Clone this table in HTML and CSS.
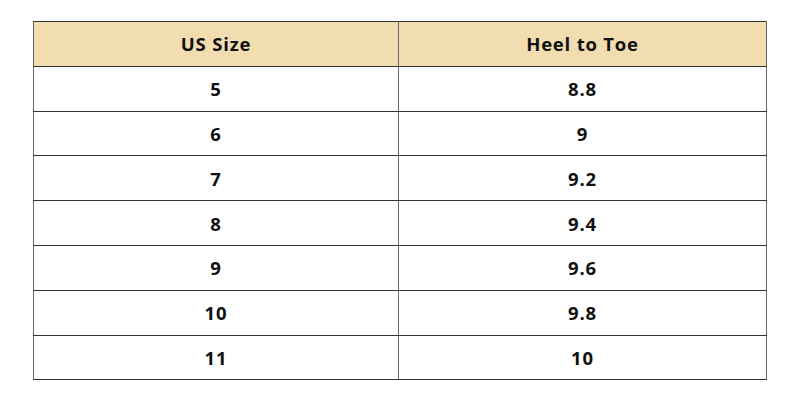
FILE: index.html
```html
<!DOCTYPE html>
<html>
<head>
<meta charset="utf-8">
<link rel="stylesheet" href="styles.css">
</head>
<body>
<div class="wrap">
<table class="size-table">
<thead>
<tr><th>US Size</th><th>Heel to Toe</th></tr>
</thead>
<tbody>
<tr><td>5</td><td>8.8</td></tr>
<tr><td>6</td><td>9</td></tr>
<tr><td>7</td><td>9.2</td></tr>
<tr><td>8</td><td>9.4</td></tr>
<tr><td>9</td><td>9.6</td></tr>
<tr><td>10</td><td>9.8</td></tr>
<tr><td>11</td><td>10</td></tr>
</tbody>
</table>
</div>
</body>
</html>
```
FILE: styles.css
```css
html, body {
  margin: 0;
  padding: 0;
  background: #ffffff;
}
.wrap {
  padding: 21px 33px 0 33px;
}
.size-table {
  width: 734px;
  border-collapse: collapse;
  font-family: "Open Sans", "Liberation Sans", sans-serif;
  font-weight: 700;
  font-size: 18.5px;
  letter-spacing: 0.8px;
  color: #111;
  table-layout: fixed;
}
.size-table th,
.size-table td {
  height: 43.8px;
  padding: 0;
  text-align: center;
  vertical-align: middle;
  border: 1px solid #333;
  border-left-color: #666;
  border-right-color: #666;
  font-weight: 700;
}
.size-table th:first-child,
.size-table td:first-child {
  width: 364px;
}
.size-table thead th {
  background: #f1ddb0;
}
```
